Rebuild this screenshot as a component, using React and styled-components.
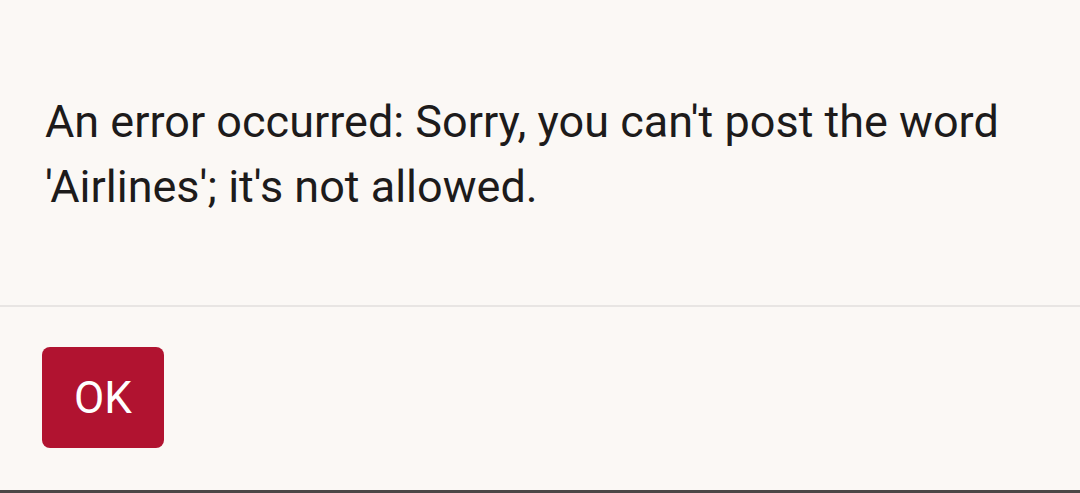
import React from "react";
import styled, { createGlobalStyle } from "styled-components";

const Global = createGlobalStyle`
  html, body { margin: 0; padding: 0; background: #fbf8f5; }
  body { font-family: Roboto, "Noto Sans", sans-serif; }
`;

const Screen = styled.div`
  width: 1080px;
  height: 493px;
  display: flex;
  flex-direction: column;
  background: #fbf8f5;
  overflow: hidden;
`;

const Message = styled.div`
  padding: 89px 45px 0 45px;
  height: 307px;
  box-sizing: border-box;
  font-size: 45px;
  line-height: 65px;
  color: #1d1b1b;
  border-bottom: 2px solid #e8e5e3;
`;

const Actions = styled.div`
  flex: 1;
  display: flex;
  align-items: flex-start;
  padding: 40px 42px 0;
`;

const Button = styled.button`
  width: 122px;
  height: 101px;
  border: none;
  border-radius: 8px;
  background: #b11330;
  color: #ffffff;
  font-family: Roboto, sans-serif;
  font-size: 44px;
  padding: 0;
`;

const BottomBar = styled.div`
  height: 3px;
  background: #4b4646;
`;

export default function App() {
  return (
    <>
      <Global />
      <Screen>
        <Message>
          An error occurred: Sorry, you can't post the word
          <br />
          'Airlines'; it's not allowed.
        </Message>
        <Actions>
          <Button>OK</Button>
        </Actions>
        <BottomBar />
      </Screen>
    </>
  );
}
